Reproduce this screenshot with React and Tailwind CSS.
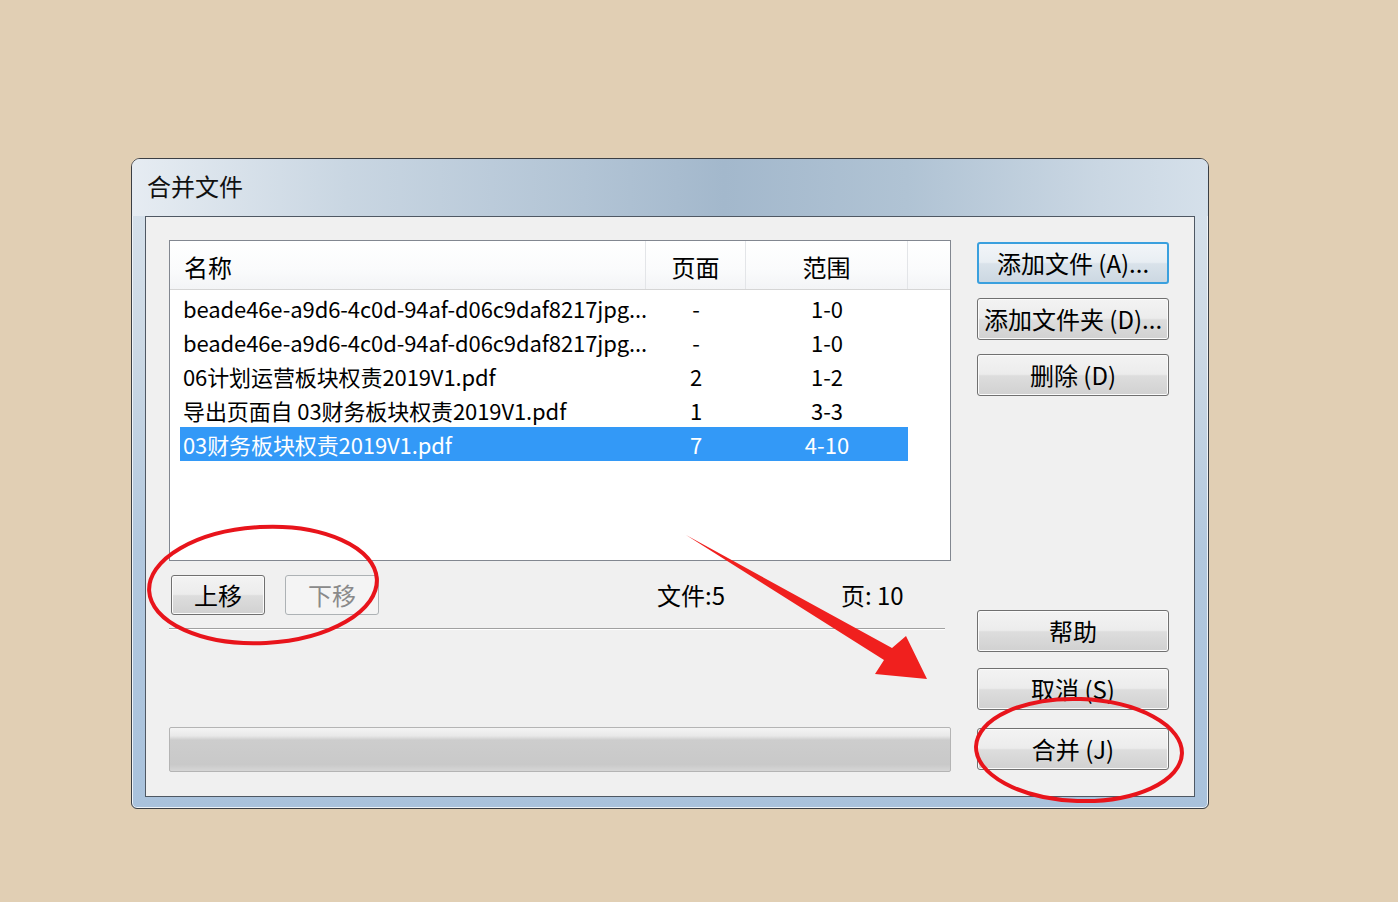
import React from 'react';

const rows = [
  { name: 'beade46e-a9d6-4c0d-94af-d06c9daf8217jpg...', pages: '-', range: '1-0' },
  { name: 'beade46e-a9d6-4c0d-94af-d06c9daf8217jpg...', pages: '-', range: '1-0' },
  { name: '06计划运营板块权责2019V1.pdf', pages: '2', range: '1-2' },
  { name: '导出页面自 03财务板块权责2019V1.pdf', pages: '1', range: '3-3' },
  { name: '03财务板块权责2019V1.pdf', pages: '7', range: '4-10', selected: true },
];

const btn =
  'flex items-center justify-center rounded-[3px] border border-[#707070] bg-[linear-gradient(180deg,#f3f3f3_0%,#ececec_48%,#dddddd_52%,#d1d1d1_100%)] shadow-[inset_0_0_0_1px_#fbfbfb] text-[24px] leading-none text-black whitespace-nowrap';

const Button = ({ children, className = '' }) => (
  <div className={`${btn} ${className}`}>{children}</div>
);

const App = () => {
  return (
    <div className="relative w-[1398px] h-[902px] overflow-hidden bg-[#e1cfb4] pt-[158px] pl-[131px] font-['Noto_Sans_CJK_SC','Noto_Sans',sans-serif]">
      {/* Window */}
      <div className="flex flex-col w-[1078px] h-[651px] rounded-t-[9px] rounded-b-[6px] border border-[#3b3f44] bg-[linear-gradient(180deg,#d9e3ec_0%,#cbd8e4_30%,#b2c8de_60%,#a9c2dc_100%)] shadow-[inset_0_0_0_1px_#eef3f8]">
        {/* Title bar */}
        <div className="h-[57px] flex items-center pl-[15px] rounded-t-[8px] bg-[linear-gradient(90deg,#e6ecf2_0%,#c9d6e2_20%,#b2c4d5_42%,#a3b8cc_55%,#b0c3d4_72%,#cad7e3_90%,#d5e0ea_100%)]">
          <span className="text-[24px] leading-none text-[#111] -mt-[3px]">合并文件</span>
        </div>

        {/* Client area */}
        <div className="mx-[13px] h-[581px] border border-[#4f5863] bg-[#f0f0f0] flex gap-[26px] pl-[23px] pt-[23px]">
          {/* Left column */}
          <div className="w-[782px] flex flex-col">
            {/* List */}
            <div className="h-[321px] border border-[#828790] bg-white flex flex-col">
              <div className="h-[49px] flex border-b border-[#d5d5d5] bg-[linear-gradient(180deg,#ffffff_0%,#fafbfc_60%,#f3f4f6_100%)] text-[24px] leading-none text-black">
                <div className="w-[476px] flex items-center pl-[14px] pt-[3px] border-r border-[#e3e5e8]">名称</div>
                <div className="w-[100px] flex items-center justify-center pt-[3px] border-r border-[#e3e5e8]">页面</div>
                <div className="w-[162px] flex items-center justify-center pt-[3px] border-r border-[#e3e5e8]">范围</div>
                <div className="flex-1" />
              </div>
              <div className="pt-[1px] pl-[10px] flex flex-col">
                {rows.map((r, i) => (
                  <div
                    key={i}
                    className={`h-[34px] w-[728px] flex items-center text-[22px] leading-[30px] ${
                      r.selected ? 'bg-[#3399f7] text-white' : 'text-black'
                    }`}
                  >
                    <div className="w-[466px] pl-[3px] whitespace-nowrap tracking-[-0.1px]">{r.name}</div>
                    <div className="w-[100px] text-center">{r.pages}</div>
                    <div className="w-[162px] text-center">{r.range}</div>
                  </div>
                ))}
              </div>
            </div>

            {/* Move buttons + stats */}
            <div className="mt-[14px] h-[40px] flex items-center">
              <Button className="ml-[2px] w-[94px] h-[40px]">上移</Button>
              <div className="ml-[20px] w-[94px] h-[40px] flex items-center justify-center rounded-[3px] border border-[#adb2b5] bg-[#f4f4f4] text-[24px] leading-none text-[#8a8a8a]">
                下移
              </div>
              <div className="ml-[278px] text-[24px] leading-none text-black">文件:5</div>
              <div className="ml-[116px] text-[24px] leading-none text-black">页: 10</div>
            </div>

            <div className="mt-[13px] w-[776px] h-[2px] border-t border-[#a0a0a0] bg-white" />

            {/* Progress bar */}
            <div className="mt-[97px] h-[45px] rounded-[2px] border border-[#b4b4b4] bg-[linear-gradient(180deg,#f4f4f4_0%,#e9e9e9_18%,#cdcdcd_28%,#c9c9c9_85%,#d6d6d6_100%)]" />
          </div>

          {/* Right column */}
          <div className="w-[192px] flex flex-col pt-[2px]">
            <div className="h-[42px] flex items-center justify-center rounded-[3px] border-2 border-[#3aa0de] bg-[linear-gradient(180deg,#f2f5f8_0%,#e8eef3_48%,#d9e2ea_52%,#ccd8e2_100%)] text-[24px] leading-none text-black whitespace-nowrap">
              添加文件 (A)...
            </div>
            <Button className="mt-[14px] h-[42px]">添加文件夹 (D)...</Button>
            <Button className="mt-[14px] h-[42px]">删除 (D)</Button>
            <Button className="mt-[214px] h-[42px]">帮助</Button>
            <Button className="mt-[16px] h-[42px]">取消 (S)</Button>
            <Button className="mt-[18px] h-[42px]">合并 (J)</Button>
          </div>
        </div>
      </div>

      {/* Red annotations */}
      <svg
        className="absolute inset-0 pointer-events-none"
        width="1398"
        height="902"
        viewBox="0 0 1398 902"
      >
        <ellipse cx="263" cy="585" rx="114" ry="58" transform="rotate(-3 263 585)" fill="none" stroke="#e8141b" strokeWidth="4" />
        <ellipse cx="1079" cy="750" rx="103" ry="51" transform="rotate(2 1079 750)" fill="none" stroke="#e8141b" strokeWidth="4" />
        <polygon
          points="686,535 892,648 906,636 927,679 875,674 884,660"
          fill="#f0201e"
        />
      </svg>
    </div>
  );
};

export default App;
